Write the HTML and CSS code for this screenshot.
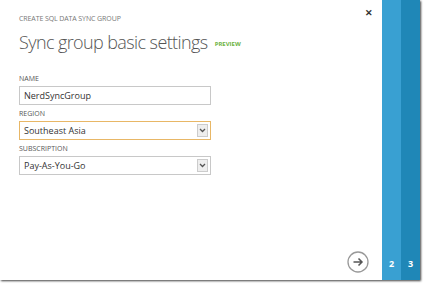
FILE: index.html
```html
<!DOCTYPE html>
<html lang="en">
<head>
    <meta charset="UTF-8">
    <title>Create SQL Data Sync Group</title>
    <link rel="stylesheet" href="styles.css">
</head>
<body>
    <div class="wizard">
        <div class="panel">
            <div class="close">&#x2715;</div>
            <div class="kicker">CREATE SQL DATA SYNC GROUP</div>
            <h1>Sync group basic settings <span class="preview">PREVIEW</span></h1>

            <!-- fields -->
            <div class="field">
                <label>NAME</label>
                <div class="box">NerdSyncGroup</div>
            </div>
            <div class="field">
                <label>REGION</label>
                <div class="box select active">Southeast Asia<span class="drop"><svg width="7" height="5" viewBox="0 0 7 5"><path d="M1 1 L3.5 3.5 L6 1" fill="none" stroke="#555" stroke-width="1.3"/></svg></span></div>
            </div>
            <div class="field">
                <label>SUBSCRIPTION</label>
                <div class="box select">Pay-As-You-Go<span class="drop"><svg width="7" height="5" viewBox="0 0 7 5"><path d="M1 1 L3.5 3.5 L6 1" fill="none" stroke="#555" stroke-width="1.3"/></svg></span></div>
            </div>

            <div class="next">
                <svg width="22" height="22" viewBox="0 0 22 22">
                    <circle cx="11" cy="11" r="10" fill="none" stroke="#999" stroke-width="1.3"/>
                    <path d="M6.5 11 H15 M11.5 7.5 L15 11 L11.5 14.5" fill="none" stroke="#555" stroke-width="1.5"/>
                </svg>
            </div>
        </div>
        <div class="step step-2"><span>2</span></div>
        <div class="step step-3"><span>3</span></div>
    </div>
</body>
</html>
```

FILE: styles.css
```css
body {
    margin: 0;
    width: 424px;
    height: 284px;
    background: #fff;
    font-family: "Open Sans", "Liberation Sans", sans-serif;
    overflow: hidden;
}
.wizard {
    display: flex;
    width: 420px;
    height: 280px;
    box-shadow: 1px 1px 2px rgba(0,0,0,0.75);
}
.panel {
    position: relative;
    width: 363px;
    padding: 14px 0 0 19px;
    background: #fff;
}
.close {
    position: absolute;
    top: 6px;
    right: 9px;
    font-size: 9px;
    font-weight: bold;
    color: #333;
}
.kicker {
    font-size: 7px;
    color: #777;
    letter-spacing: -0.1px;
}
h1 {
    margin: 7px 0 20px;
    font-size: 18px;
    font-weight: 300;
    color: #555;
    letter-spacing: -0.6px;
}
.preview {
    font-size: 6px;
    font-weight: bold;
    color: #6db33f;
    letter-spacing: 0;
    vertical-align: middle;
    margin-left: 3px;
}
.field {
    margin-bottom: 4px;
}
.field label {
    display: block;
    font-size: 7px;
    color: #555;
    margin-bottom: 3px;
}
.box {
    position: relative;
    box-sizing: border-box;
    width: 192px;
    height: 19px;
    border: 1px solid #c8c8c8;
    padding: 2px 4px;
    font-size: 9px;
    color: #333;
}
.box.active {
    border-color: #e8b766;
}
.drop {
    position: absolute;
    top: 2px;
    right: 2px;
    width: 11px;
    height: 13px;
    background: #eee;
    border: 1px solid #ccc;
    box-sizing: border-box;
    display: flex;
    align-items: center;
    justify-content: center;
}
.next {
    position: absolute;
    left: 347px;
    top: 251px;
}
.step {
    display: flex;
    align-items: flex-end;
    justify-content: center;
    padding-bottom: 10px;
    box-sizing: border-box;
    color: #fff;
    font-size: 9px;
    font-weight: bold;
}
.step-2 {
    width: 19px;
    background: #39a0d2;
}
.step-3 {
    width: 19px;
    background: #1f87b7;
}
```
